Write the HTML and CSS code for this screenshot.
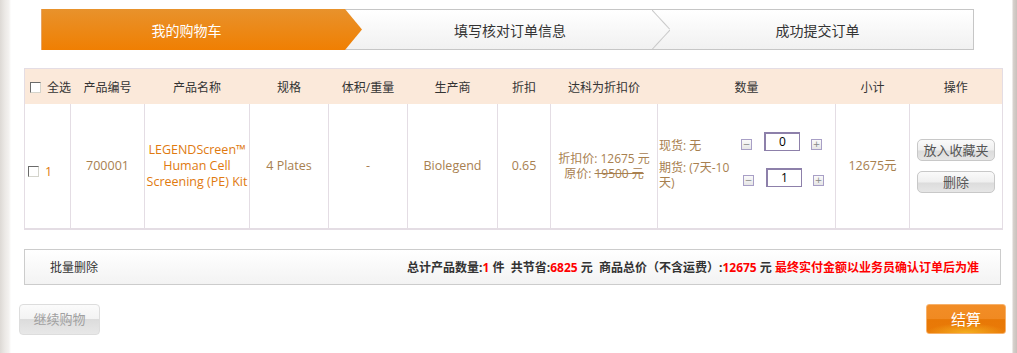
FILE: index.html
```html
<!DOCTYPE html>
<html lang="zh-CN">
<head>
<meta charset="utf-8">
<title>我的购物车</title>
<link rel="stylesheet" href="styles.css">
</head>
<body>
<div class="page">
  <div class="steps">
    <div class="step step-active"><span>我的购物车</span></div>
    <div class="step step-mid"><span>填写核对订单信息</span></div>
    <div class="step step-last"><span>成功提交订单</span></div>
  </div>

  <table class="cart">
    <colgroup>
      <col class="c1"><col class="c2"><col class="c3"><col class="c4"><col class="c5"><col class="c6"><col class="c7"><col class="c8"><col class="c9"><col class="c10"><col class="c11">
    </colgroup>
    <thead>
      <tr>
        <th class="th-check"><span class="chk"></span>全选</th>
        <th>产品编号</th>
        <th>产品名称</th>
        <th>规格</th>
        <th>体积/重量</th>
        <th>生产商</th>
        <th>折扣</th>
        <th>达科为折扣价</th>
        <th>数量</th>
        <th>小计</th>
        <th>操作</th>
      </tr>
    </thead>
    <tbody>
      <tr>
        <td class="td-check"><span class="check-wrap"><span class="chk"></span><span class="idx">1</span></span></td>
        <td>700001</td>
        <td class="pname">LEGENDScreen™ Human Cell Screening (PE) Kit</td>
        <td>4 Plates</td>
        <td>-</td>
        <td>Biolegend</td>
        <td>0.65</td>
        <td class="price">折扣价: 12675 元<br>原价: <s>19500 元</s></td>
        <td class="qty-cell">
          <div class="qty">
            <div class="qty-label">现货: 无</div>
            <div class="qty-ctrl"><span class="pm">−</span><span class="qin">0</span><span class="pm">+</span></div>
            <div class="qty-label qty-label2">期货: (7天-10天)</div>
            <div class="qty-ctrl qty-ctrl2"><span class="pm">−</span><span class="qin">1</span><span class="pm">+</span></div>
          </div>
        </td>
        <td>12675元</td>
        <td class="ops">
          <span class="gbtn">放入收藏夹</span>
          <span class="gbtn">删除</span>
        </td>
      </tr>
    </tbody>
  </table>

  <div class="summary">
    <span class="bulk">批量删除</span>
    <span class="totals">总计产品数量:<em>1</em> 件&nbsp;&nbsp;共节省:<em>6825</em> 元&nbsp;&nbsp;商品总价（不含运费）:<em>12675</em> 元 <em>最终实付金额以业务员确认订单后为准</em></span>
  </div>

  <div class="actions">
    <span class="btn-continue">继续购物</span>
    <span class="btn-pay">结算</span>
  </div>
</div>
</body>
</html>
```

FILE: styles.css
```css
html, body {
  margin: 0;
  padding: 0;
}
body {
  width: 1017px;
  height: 353px;
  overflow: hidden;
  font-family: "Open Sans", "Noto Sans CJK SC", sans-serif;
  font-size: 12px;
  color: #333;
  background:
    linear-gradient(to right, #ddd9d5 0, #ece9e6 5px, #f4f2f0 9px, #ffffff 11px, #ffffff 1012px, #d8d2ce 1013px, #c9c1bc 1017px);
}
.page {
  padding-top: 9px;
}

/* steps */
.steps {
  display: flex;
  margin-left: 41px;
  width: 933px;
  height: 41px;
  box-sizing: border-box;
  border: 1px solid #c6c6c6;
  border-left: none;
  background: linear-gradient(#ffffff, #f1f1f1);
}
.step {
  position: relative;
  display: flex;
  align-items: center;
  justify-content: center;
  font-size: 14px;
  color: #333;
}
.step-active {
  width: 321px;
  margin-top: -1px;
  margin-bottom: -1px;
  padding-right: 17px;
  box-sizing: border-box;
  color: #fff;
  background: linear-gradient(#e8922c, #f07f02);
  clip-path: polygon(0 0, calc(100% - 17px) 0, 100% 50%, calc(100% - 17px) 100%, 0 100%);
  border-left: 1px solid #e6a465;
}
.step-active span {
  padding-right: 14px;
}
.step-mid {
  width: 308px;
  box-sizing: border-box;
  padding-right: 12px;
}
.step-mid::after {
  content: "";
  position: absolute;
  right: 0;
  top: 0;
  width: 18px;
  height: 39px;
  background:
    linear-gradient(to top right, transparent calc(50% - 1px), #c9c9c9 50%, transparent calc(50% + 1px)) top / 100% 50% no-repeat,
    linear-gradient(to bottom right, transparent calc(50% - 1px), #c9c9c9 50%, transparent calc(50% + 1px)) bottom / 100% 50% no-repeat;
}
.step-last {
  flex: 1;
  padding-right: 8px;
}

/* table */
.cart {
  margin: 18px 0 0 24px;
  width: 978px;
  table-layout: fixed;
  border-collapse: collapse;
  border: 1px solid #e4dde4;
  border-bottom-width: 2px;
}
.c1 { width: 46px; }
.c2 { width: 74px; }
.c3 { width: 105px; }
.c4 { width: 79px; }
.c5 { width: 79px; }
.c6 { width: 90px; }
.c7 { width: 53px; }
.c8 { width: 107px; }
.c9 { width: 178px; }
.c10 { width: 74px; }
.c11 { width: 93px; }

.cart th {
  height: 35px;
  padding: 0;
  background: #fbe9da;
  font-weight: normal;
  color: #333;
  text-align: center;
}
.cart th.th-check {
  text-align: left;
  padding-left: 5px;
  white-space: nowrap;
}
.cart td {
  height: 124px;
  padding: 0;
  border-left: 1px solid #e4dde4;
  text-align: center;
  color: #a8804f;
  font-size: 12.5px;
  line-height: 16px;
}
.cart td:first-child {
  border-left: none;
}
.chk {
  display: inline-block;
  width: 9px;
  height: 9px;
  margin-right: 6px;
  vertical-align: -1px;
  background: #fff;
  border: 1px solid;
  border-color: #6a6a6a #d4d4cc #d4d4cc #6a6a6a;
}
.cart td.td-check {
  text-align: left;
  padding-left: 3px;
  white-space: nowrap;
}
.check-wrap {
  display: inline-block;
  padding-top: 11px;
}
.idx {
  color: #e07a10;
}
.cart td.pname {
  color: #e07a10;
}
.price s {
  text-decoration: line-through;
}
.cart td.price {
  line-height: 15px;
  font-size: 12px;
}

/* quantity */
.cart td.qty-cell {
  text-align: left;
  padding-left: 1px;
  font-size: 12px;
}
.qty {
  display: grid;
  grid-template-columns: 82px 1fr;
  align-items: start;
  row-gap: 7px;
  margin-bottom: 11px;
}
.qty-label {
  line-height: 15px;
  margin-top: 6px;
}
.qty-label2 {
  margin-top: 0;
  width: 76px;
}
.qty-ctrl {
  display: flex;
  align-items: flex-start;
}
.qty-ctrl2 {
  padding-left: 2px;
  margin-top: 8px;
}
.pm {
  display: inline-flex;
  align-items: center;
  justify-content: center;
  width: 9px;
  height: 9px;
  margin-top: 7px;
  border: 1px solid #a89fc6;
  background: linear-gradient(#fafafa, #e6e6e6);
  color: #888;
  font-family: "DejaVu Sans", sans-serif;
  font-size: 9px;
  line-height: 9px;
}
.qin {
  display: inline-block;
  box-sizing: border-box;
  width: 36px;
  height: 19px;
  margin: 0 11px 0 12px;
  border: 1px solid #8d80aa;
  border-top-width: 2px;
  border-left-width: 2px;
  background: #fff;
  color: #000;
  text-align: center;
  line-height: 15px;
  font-size: 12px;
}

/* ops */
.gbtn {
  display: block;
  box-sizing: border-box;
  width: 78px;
  height: 22px;
  margin: 0 0 10px 7px;
  border: 1px solid #c8c8c8;
  border-radius: 5px;
  background: linear-gradient(#fafafa 0, #efefef 50%, #dcdcdc 55%, #e6e6e6 100%);
  color: #555;
  font-size: 13px;
  line-height: 20px;
  text-align: center;
}
.gbtn:last-child {
  margin-bottom: 0;
}

/* summary */
.summary {
  display: flex;
  align-items: center;
  justify-content: space-between;
  box-sizing: border-box;
  margin: 19px 0 0 24px;
  width: 977px;
  height: 36px;
  padding: 0 21px 0 25px;
  border: 1px solid #cccccc;
  background: linear-gradient(#ffffff, #f3f3f3);
}
.bulk {
  color: #333;
}
.totals {
  font-weight: bold;
  color: #333;
}
.totals em {
  font-style: normal;
  color: #ff0000;
}

/* bottom buttons */
.actions {
  display: flex;
  justify-content: space-between;
  margin: 19px 11px 0 19px;
}
.btn-continue {
  box-sizing: border-box;
  width: 81px;
  height: 31px;
  border: 1px solid #dddddd;
  border-radius: 4px;
  background: linear-gradient(#fbfbfb 0, #f3f3f3 48%, #dcdcdc 50%, #e8e8e8 100%);
  color: #a0a0a0;
  font-size: 13px;
  line-height: 29px;
  text-align: center;
}
.btn-pay {
  box-sizing: border-box;
  width: 80px;
  height: 30px;
  border: 1px solid #f7b16a;
  border-radius: 3px;
  background:
    radial-gradient(ellipse 40px 10px at 50% 100%, #f4b020 0, rgba(244,176,32,0) 100%),
    linear-gradient(#f28d26 0, #f08a22 50%, #e87806 52%, #e97a08 100%);
  color: #fff;
  font-size: 15px;
  line-height: 28px;
  text-align: center;
}
```
